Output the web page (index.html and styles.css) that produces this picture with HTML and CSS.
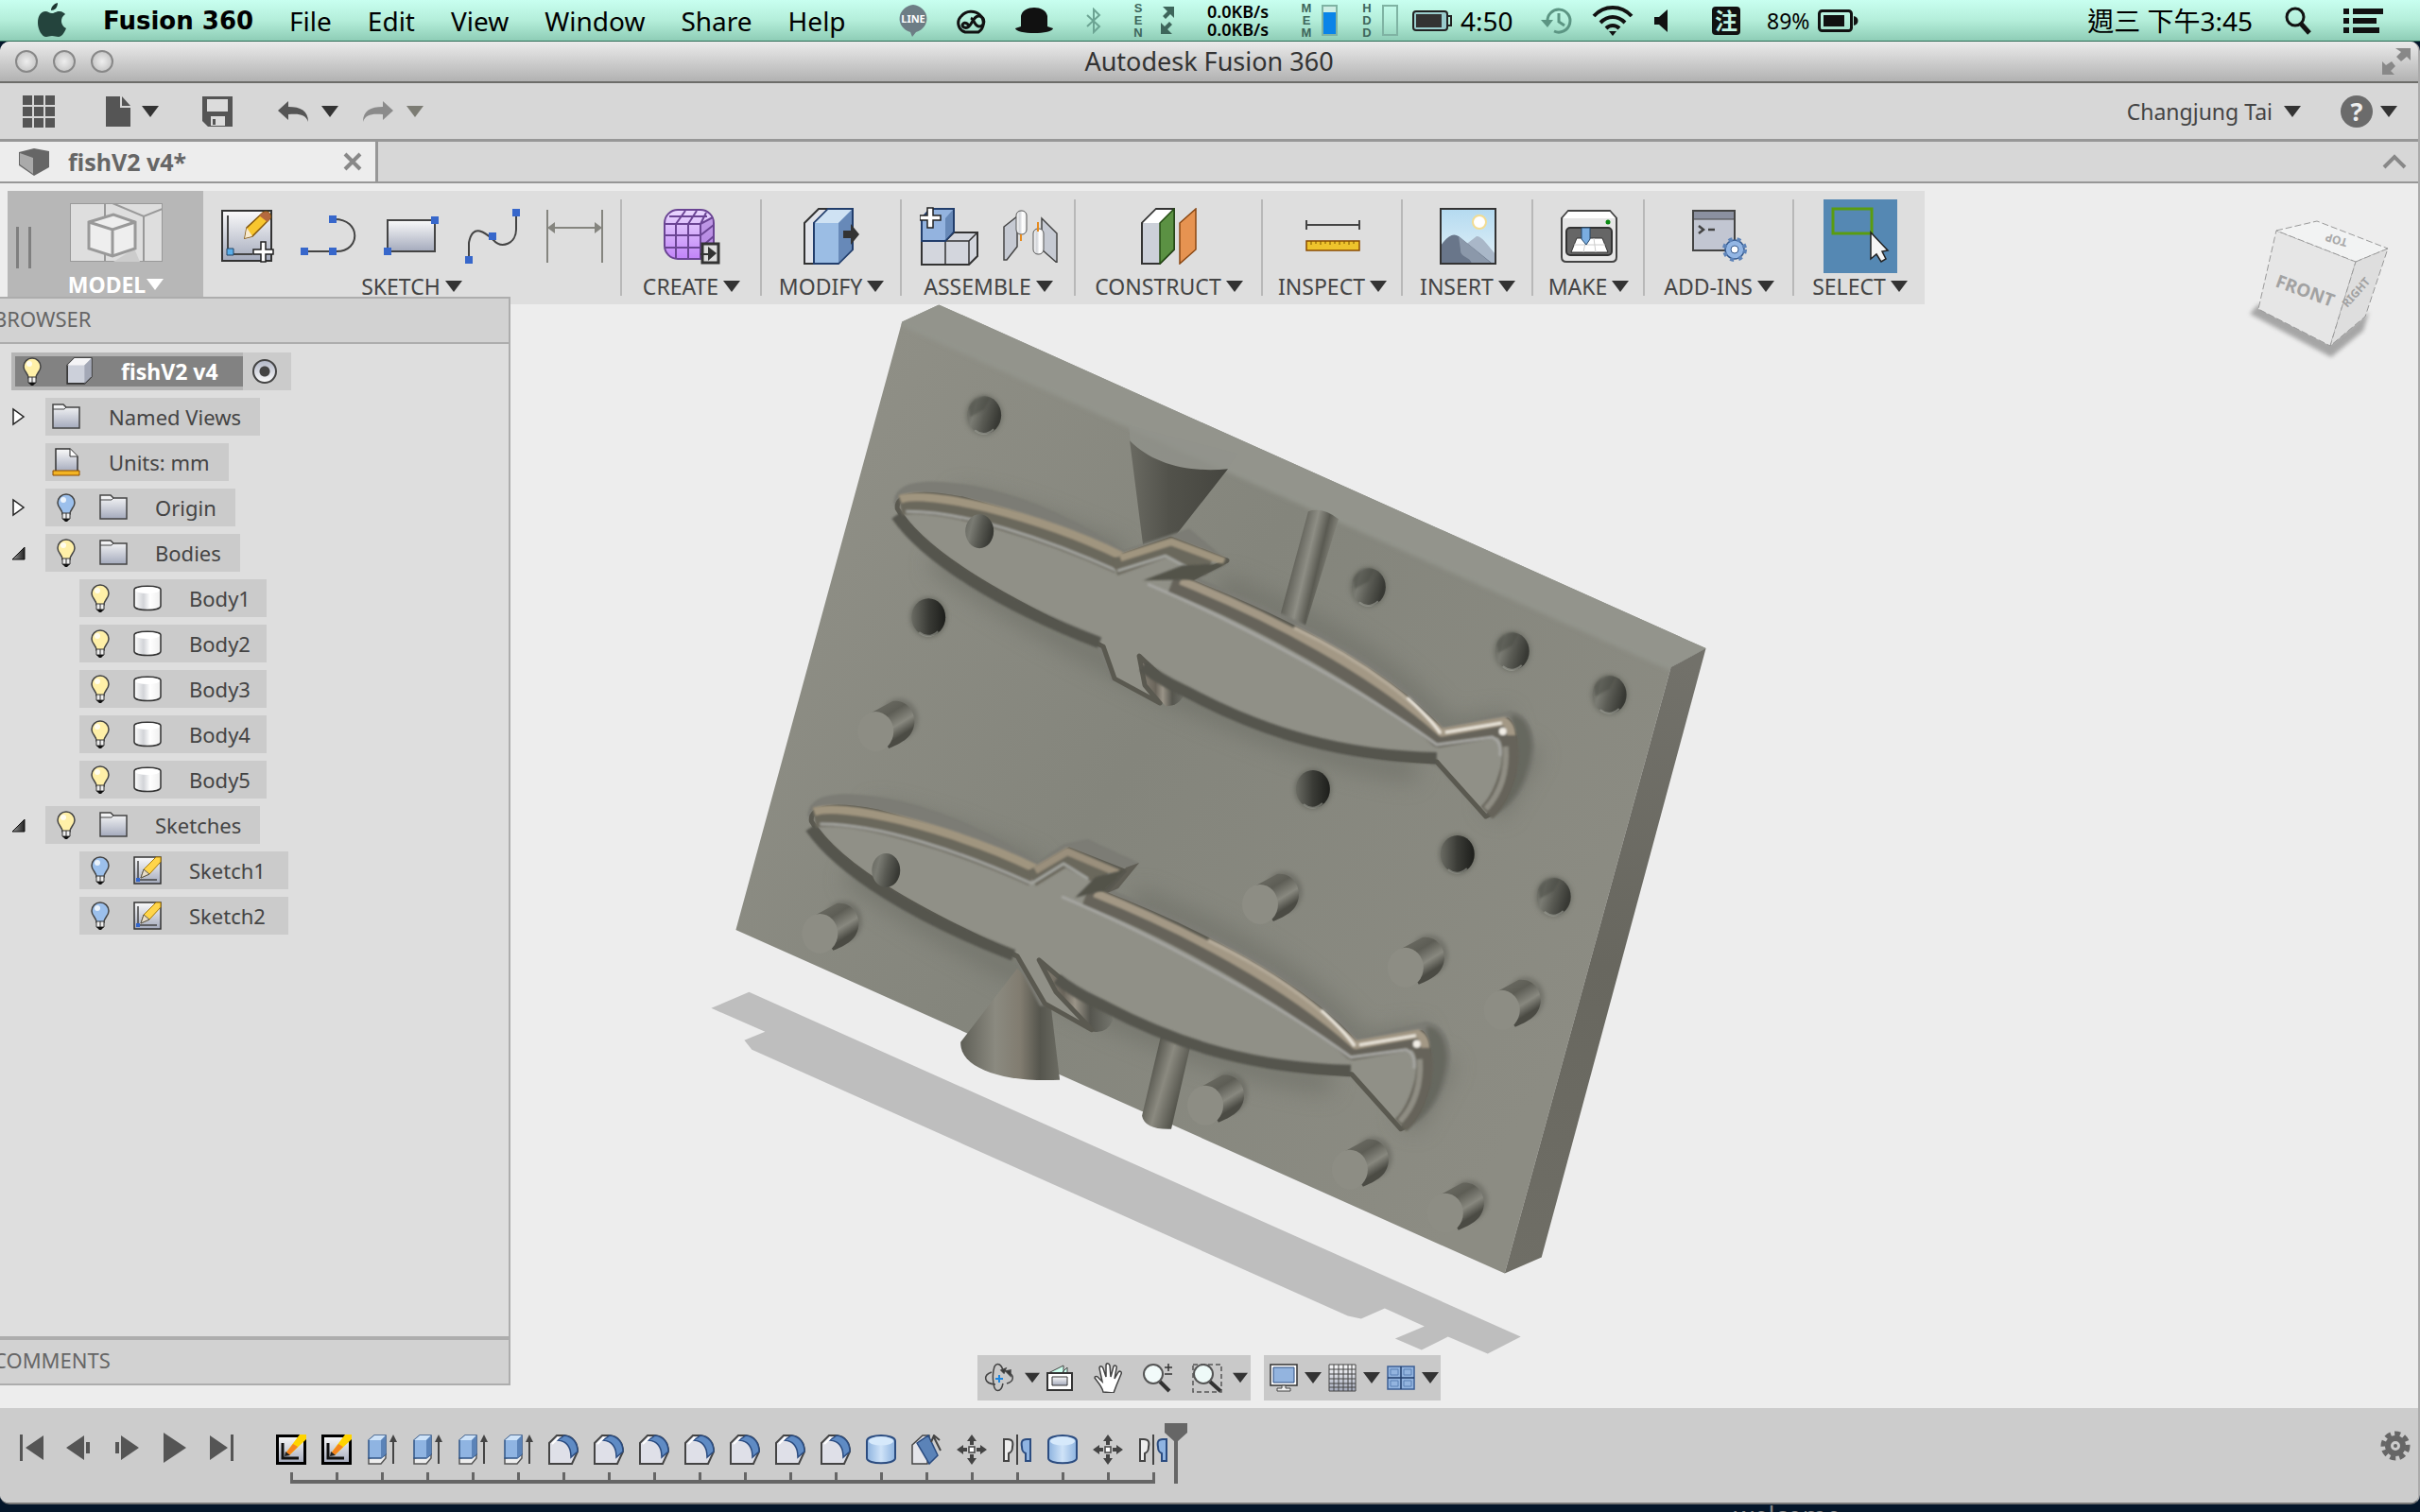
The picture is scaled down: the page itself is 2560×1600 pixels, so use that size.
FILE: index.html
```html
<!DOCTYPE html>
<html lang="en">
<head>
<meta charset="utf-8">
<title>Autodesk Fusion 360</title>
<link rel="stylesheet" href="styles.css">
</head>
<body>
<svg class="defs" aria-hidden="true">
  <defs>
    <linearGradient id="steel" x1="0" y1="0" x2="0" y2="1"><stop offset="0" stop-color="#fafafa"/><stop offset="1" stop-color="#a4aabc"/></linearGradient>
    <linearGradient id="blue" x1="0" y1="0" x2="1" y2="0"><stop offset="0" stop-color="#8db3df"/><stop offset=".5" stop-color="#cfe3f8"/><stop offset="1" stop-color="#8db3df"/></linearGradient>
    <linearGradient id="white" x1="0" y1="0" x2="1" y2="0"><stop offset="0" stop-color="#fff"/><stop offset=".35" stop-color="#d2d4d8"/><stop offset=".6" stop-color="#fff"/><stop offset="1" stop-color="#eee"/></linearGradient>
    <linearGradient id="purple" x1="0" y1="0" x2="0" y2="1"><stop offset="0" stop-color="#ead9ff"/><stop offset="1" stop-color="#c183f8"/></linearGradient>
    <linearGradient id="sky" x1="0" y1="0" x2="0" y2="1"><stop offset="0" stop-color="#b4daf0"/><stop offset="1" stop-color="#e2f1f8"/></linearGradient>
    <linearGradient id="dusk" x1="0" y1="0" x2="1" y2="0"><stop offset="0" stop-color="#999"/><stop offset="1" stop-color="#222"/></linearGradient>
    <symbol id="caret" viewBox="0 0 18 12"><path d="M0 0h18L9 12z" fill="currentColor"/></symbol>
    <symbol id="bulb-shape" viewBox="0 0 30 30"><path d="M15 1a9 9 0 0 0-9 9c0 5 5 7 5 12h8c0-5 5-7 5-12a9 9 0 0 0-9-9z" fill="currentColor" stroke="#444" stroke-width="1.5"/><circle cx="12" cy="7" r="3" fill="#fff" opacity=".8"/><path d="M11 21h8v6h-8z" fill="#eee" stroke="#333"/><path d="M15 21v6" stroke="#333"/><path d="M11 27h8l-3 3h-2z" fill="#111"/></symbol>
    <symbol id="folder" viewBox="0 0 30 28"><path d="M1 3V1h11l3 3h14v22H1z" fill="url(#steel)" stroke="#444" stroke-width="1.5"/><path d="M1 6h12l2-2" fill="none" stroke="#444"/></symbol>
    <symbol id="units" viewBox="0 0 30 30"><path d="M4 25V1h15l8 8v16z" fill="url(#steel)" stroke="#333" stroke-width="1.5"/><path d="M19 1v8h8" fill="#fff" stroke="#333"/><path d="M1 24h28v5H1z" fill="#f3b423" stroke="#8a4b00"/></symbol>
    <symbol id="cyl" viewBox="0 0 30 28"><path d="M1 5v17c0 6 28 6 28 0V5c0-5-28-5-28 0z" fill="url(#white)" stroke="#333" stroke-width="1.5"/><ellipse cx="15" cy="5.500" rx="13" ry="3.500" fill="#fff"/></symbol>
    <symbol id="cube" viewBox="0 0 28 28"><path d="M2 8l7-7h17v18l-7 7H2z" fill="#ccd0da" stroke="#333" stroke-width="1.500"/><path d="M2 8l7-7h17l-7 7z" fill="#f4f4f6"/><path d="M19 8l7-7v18l-7 7z" fill="#a3a8b6"/></symbol>
    <symbol id="sketch" viewBox="0 0 30 30"><path d="M1 1h28v28H1z" fill="url(#steel)" stroke="#333" stroke-width="1.500"/><path d="M5 5v20h20" fill="none" stroke="#444" stroke-width="1.500"/><path d="M3 23h4v4H3z" fill="#36c"/><path d="M8 23l3-9L24 1h5v5L17 19z" fill="#ffd54a" stroke="#a87900"/><path d="M8 23l3-9 6 5z" fill="#e8dcc4" stroke="#555"/></symbol>
    <symbol id="t-sketch" viewBox="0 0 32 32"><path d="M1.500 1.500h29v29h-29z" fill="url(#steel)" stroke="#000" stroke-width="3"/><path d="M7 9v16h17" fill="none" stroke="#111" stroke-width="3"/><path d="M10 20L25 0h7v5L14 22z" fill="#ffd400"/><path d="M10 20l8-10 5 3-9 9z" fill="#f5841f"/><path d="M9 23l1-5 5 4z" fill="#222"/></symbol>
    <symbol id="t-extrude" viewBox="0 0 32 32"><path d="M2 25v6h13l5-6v-4z" fill="#eee" stroke="#555" stroke-width="1.500"/><path d="M2 6l6-5h12v20l-5 4H2z" fill="#8fb4e2" stroke="#2f5487" stroke-width="1.500"/><path d="M2 6l6-5h12l-5 5z" fill="#cfe3f8"/><path d="M15 6l5-5v20l-5 4z" fill="#5b83b8"/><path d="M28 31V5" stroke="#444" stroke-width="2"/><path d="M24 8l4-8 4 8z" fill="#444"/></symbol>
    <symbol id="t-fillet" viewBox="0 0 32 32"><path d="M1 31V9l8-8h8c9 1 14 8 14 17l-6 13z" fill="#dfe0e8" stroke="#444" stroke-width="2"/><path d="M10 6L17 1c9 1 14 8 14 17l-7 6C24 14 20 7 10 6z" fill="#5f8bc4" stroke="#2b4c80" stroke-width="1.500"/><path d="M4 10l7-7" stroke="#fff" stroke-width="2"/></symbol>
    <symbol id="t-cyl" viewBox="0 0 32 32"><path d="M1 7v18c0 7 30 7 30 0V7C31-1 1-1 1 7z" fill="url(#blue)" stroke="#2b4c80" stroke-width="2"/><ellipse cx="16" cy="7" rx="13" ry="4.500" fill="#d6e9fb"/></symbol>
    <symbol id="t-draft" viewBox="0 0 32 32"><path d="M1 31V11L12 1h7L17 31z" fill="#e4e5ea" stroke="#444" stroke-width="1.500"/><path d="M6 9l12-8 10 21-9 9z" fill="#5b83b8" stroke="#2b4c80" stroke-width="1.500"/><path d="M24 3l7 14M21 8l3-7 6 5" fill="none" stroke="#444" stroke-width="2"/></symbol>
    <symbol id="t-move" viewBox="0 0 32 32"><path d="M16 0l5 7h-3v4h-4V7h-3zM16 32l5-7h-3v-4h-4v4h-3zM0 16l7-5v3h4v4H7v3zM32 16l-7-5v3h-4v4h4v3z" fill="#444"/><path d="M13 13h6v6h-6z" fill="#fff" stroke="#444" stroke-width="1.500"/></symbol>
    <symbol id="t-mirror" viewBox="0 0 32 32"><path d="M2 5h4c5 0 6 3 5 8 0 5-2 6-4 7v8H2z" fill="#eee" stroke="#444" stroke-width="2"/><path d="M30 5h-4c-5 0-6 3-5 8 0 5 2 6 4 7v8h5z" fill="#8fb4e2" stroke="#2b4c80" stroke-width="2"/><path d="M16 0v32" stroke="#444" stroke-width="2"/></symbol>
    <linearGradient id="plate" gradientUnits="userSpaceOnUse" x1="850" y1="500" x2="1700" y2="1050"><stop offset="0" stop-color="#8f8f86"/><stop offset=".45" stop-color="#84857c"/><stop offset="1" stop-color="#8c8c83"/></linearGradient>
    <linearGradient id="side" gradientUnits="userSpaceOnUse" x1="1780" y1="700" x2="1600" y2="1340"><stop offset="0" stop-color="#72716a"/><stop offset=".5" stop-color="#68675f"/><stop offset="1" stop-color="#6f6e66"/></linearGradient>
    <linearGradient id="hole" x1="0" y1="0" x2="1" y2=".3"><stop offset="0" stop-color="#66675f"/><stop offset=".3" stop-color="#7a7b73"/><stop offset=".6" stop-color="#5a5b54"/><stop offset="1" stop-color="#383934"/></linearGradient>
    <linearGradient id="deep" x1="0" y1="0" x2="1" y2="0"><stop offset="0" stop-color="#6a6b63"/><stop offset=".5" stop-color="#3a3b36"/><stop offset="1" stop-color="#1d1e1b"/></linearGradient>
    <linearGradient id="funnel" x1="0" y1="0" x2="1" y2="0"><stop offset="0" stop-color="#6a6a62"/><stop offset=".4" stop-color="#52524b"/><stop offset="1" stop-color="#45453f"/></linearGradient>
    <linearGradient id="cone" x1="0" y1="0" x2="1" y2="0"><stop offset="0" stop-color="#5f5f57"/><stop offset=".35" stop-color="#8b8a80"/><stop offset=".6" stop-color="#817c70"/><stop offset=".8" stop-color="#55554d"/><stop offset="1" stop-color="#6c6c63"/></linearGradient>
    <linearGradient id="rod" gradientUnits="userSpaceOnUse" x1="1220" y1="1130" x2="1254" y2="1140"><stop offset="0" stop-color="#5a5a52"/><stop offset=".45" stop-color="#8b8a80"/><stop offset="1" stop-color="#56564e"/></linearGradient>
    <linearGradient id="groove" gradientUnits="userSpaceOnUse" x1="1368" y1="600" x2="1402" y2="608"><stop offset="0" stop-color="#62625a"/><stop offset=".4" stop-color="#8e8e85"/><stop offset=".75" stop-color="#5a5a52"/><stop offset="1" stop-color="#7c7c73"/></linearGradient>
    <linearGradient id="keel" gradientUnits="objectBoundingBox" x1="0" y1="0" x2="1" y2="0"><stop offset="0" stop-color="#8c867a"/><stop offset=".35" stop-color="#6a655b"/><stop offset=".5" stop-color="#9a9488"/><stop offset=".7" stop-color="#55554e"/><stop offset="1" stop-color="#74756d"/></linearGradient>
    <linearGradient id="pin" x1="0" y1="0" x2=".6" y2="1"><stop offset="0" stop-color="#74746b"/><stop offset=".4" stop-color="#5d5d55"/><stop offset=".65" stop-color="#88887f"/><stop offset=".85" stop-color="#4b4b44"/></linearGradient>
    <filter id="soft" x="-20%" y="-20%" width="140%" height="140%"><feGaussianBlur stdDeviation="12"/></filter>
    <filter id="haze" x="-20%" y="-20%" width="140%" height="140%"><feGaussianBlur stdDeviation="2"/></filter>
    <filter id="sheen" x="-20%" y="-20%" width="140%" height="140%"><feGaussianBlur stdDeviation="1.200"/></filter>
    <clipPath id="face"><path d="M955 340L994 322 1806 686 1769 706 1593 1348 779 984z"/></clipPath>
    <g id="bore"><ellipse rx="20" ry="22" fill="#5f6058" opacity=".5" filter="url(#haze)"/><ellipse rx="18" ry="20" fill="url(#hole)"/><path d="M-16-8C-12-20 2-22 6-18L0-6-15 2z" fill="#45463f" opacity=".5" filter="url(#sheen)"/><path d="M-10 16Q0 24 10 15" fill="none" stroke="#a0a199" stroke-width="2" opacity=".6"/></g>
    <g id="bore-deep"><ellipse rx="20" ry="22" fill="#5f6058" opacity=".6" filter="url(#haze)"/><ellipse rx="18" ry="20" fill="url(#deep)"/><path d="M-10 16Q0 24 10 15" fill="none" stroke="#9a9b93" stroke-width="2" opacity=".6"/></g>
    <g id="peg"><ellipse cx="25" cy="-13" rx="20" ry="22" fill="#5a5a52" opacity=".45" filter="url(#haze)"/><path d="M-8-18L18-32C32-34 42-22 41-8 39 4 33 10 14 18z" fill="url(#pin)"/><ellipse rx="19" ry="21" fill="#8d8d84"/></g>
    <path id="belly" d="M949 545C980 590 1060 640 1164 680M1210 705C1235 724 1245 726 1260 734 1340 776 1420 800 1521 802" fill="none" stroke="#55554d" stroke-width="12" filter="url(#sheen)"/>
    <g id="snout" fill="none" filter="url(#sheen)">
      <path d="M953 534C1000 526 1110 562 1185 596" stroke="#6a675c" stroke-width="22"/>
      <path d="M953 528C965 523 1000 526 1045 537 1100 551 1150 570 1187 588" stroke="#a0957f" stroke-width="9"/>
      <path d="M959 541C1020 540 1110 571 1183 604" stroke="#a1a29d" stroke-width="3"/>
    </g>
    <g id="flank" fill="none" filter="url(#sheen)">
      <path d="M1240 618C1330 652 1460 725 1523 782L1588 771Q1603 778 1598 812 1590 845 1574 860" stroke="#66645a" stroke-width="18"/>
      <path d="M1594 790C1596 820 1586 842 1573 856" stroke="#8f8d83" stroke-width="6"/>
      <path d="M1250 614C1345 652 1455 710 1526 775L1592 763Q1600 768 1600 778" stroke="#a39885" stroke-width="9"/>
      <path d="M1215 618C1320 662 1450 735 1521 788L1580 780Q1590 784 1588 800" stroke="#a6a6a2" stroke-width="3"/>
      <path d="M1370 664C1450 702 1505 748 1526 776" stroke="#b5ab9a" stroke-width="4"/>
      <path d="M1490 738Q1514 760 1525 776M1530 775L1590 765" stroke="#ece7dd" stroke-width="3"/>
      <circle cx="1591" cy="774" r="4" fill="#f2eee6"/>
    </g>
  </defs>
</svg>

<header class="menubar">
  <nav class="menus" aria-label="Application menu">
    <svg class="apple" viewBox="0 0 32 38" aria-label="Apple"><path d="M22 0c0 5-3 8-7 8 0-4 3-7 7-8z" fill="#1d3530"/><path d="M16 11c3 0 4-2 8-2 3 0 5 2 6 3-6 4-5 12 1 15-2 5-5 9-8 9s-4-1-7-1-4 1-6 1c-5 0-9-8-9-15C1 13 5 9 9 9c3 0 4 2 7 2z" fill="#24443d"/></svg>
    <button class="app">Fusion 360</button>
    <button>File</button><button>Edit</button><button>View</button><button>Window</button><button>Share</button><button>Help</button>
  </nav>
  <div class="status">
    <svg width="36" height="34" viewBox="0 0 36 34"><path d="M18 0a17 15 0 0 1 3 29l-4 5-2-5A17 15 0 0 1 18 0z" fill="#6d7d85"/><text x="18" y="19" text-anchor="middle" font-size="11" font-weight="700" fill="#fff">LINE</text></svg>
    <svg width="38" height="28" viewBox="0 0 38 28" fill="none" stroke="#111" stroke-width="3"><path d="M12 26a10 10 0 0 1-4-17A13 12 0 1 1 26 26z"/><path d="M16 19l-2-2c-4-3-7 3-3 4 8 3 8-13 16-12 7 1 6 11 0 11-5 0-5-7-9-9"/></svg>
    <svg width="40" height="28" viewBox="0 0 40 28"><path d="M6 20V9c2-12 26-12 28 0v11l6 2c0 3-10 5-20 5S0 25 0 22z" fill="#111"/></svg>
    <svg width="16" height="28" viewBox="0 0 16 28"><path d="M1 8l13 12-6 6V2l6 6L1 20" fill="none" stroke="#6ca493" stroke-width="2"/></svg>
    <span class="stack">S<br>E<br>N</span>
    <svg width="16" height="32" viewBox="0 0 16 32"><path d="M3 1h12v12l-4-4-5 5-3-3 5-5zM1 18l4 4 5-5 3 3-5 5 5 5H1z" fill="#3e665b"/></svg>
    <span class="rate">0.0KB/s<br>0.0KB/s</span>
    <span class="meter"><span class="stack">M<br>E<br>M</span><i class="bar full"></i></span>
    <span class="meter"><span class="stack">H<br>D<br>D</span><i class="bar"></i></span>
    <span class="pair"><svg width="42" height="22" viewBox="0 0 42 22"><rect x="1" y="1" width="36" height="20" rx="3" fill="#9cc" stroke="#222" stroke-width="2"/><path d="M4 4h27v14H4z" fill="#333"/><path d="M38 6h3v10h-3" fill="none" stroke="#222" stroke-width="2"/></svg>4:50</span>
    <svg width="34" height="30" viewBox="0 0 34 30"><path d="M7 16A12 12 0 1 1 14 26M19 7v9l6 4" fill="none" stroke="#5c9583" stroke-width="3"/><path d="M0 14h13l-6 8z" fill="#5c9583"/></svg>
    <svg width="44" height="32" viewBox="0 0 44 32" fill="none" stroke="#111" stroke-width="4"><path d="M2 11c11-12 29-12 40 0M9 18c8-8 18-8 26 0M15 24c4-4 10-4 14 0"/><path d="M18 27h8l-4 5z" fill="#111" stroke="none"/></svg>
    <svg width="14" height="24" viewBox="0 0 14 24"><path d="M0 8h5l9-8v24l-9-8H0z" fill="#111"/></svg>
    <span class="ime">注</span>
    <span class="pair small">89% <svg width="43" height="24" viewBox="0 0 43 24"><rect x="1.500" y="1.500" width="34" height="21" rx="3" fill="none" stroke="#111" stroke-width="3"/><path d="M6 6h22v12H6z" fill="#111"/><path d="M38 7c6 1 6 9 0 10z" fill="#111"/></svg></span>
  </div>
  <div class="clock">
    <span>週三 下午3:45</span>
    <svg width="28" height="30" viewBox="0 0 28 30"><circle cx="11" cy="11" r="9" fill="none" stroke="#111" stroke-width="3"/><path d="M17 18l9 10" stroke="#111" stroke-width="5"/></svg>
    <svg width="42" height="26" viewBox="0 0 42 26"><path d="M0 0h6v6H0zM0 10h6v6H0zM0 20h6v6H0zM10 0h32v6H10zM10 10h25v6H10zM10 20h28v6H10z" fill="#111"/></svg>
  </div>
</header>

<main class="window">
  <div class="titlebar">
    <div class="lights"><button aria-label="Close"></button><button aria-label="Minimize"></button><button aria-label="Zoom"></button></div>
    <h1>Autodesk Fusion 360</h1>
    <button class="full-screen" aria-label="Full screen"><svg width="30" height="28" viewBox="0 0 30 28"><path d="M14 0h16v13l-4-4-6 5-5-5 5-5zM0 14l4 4 6-4 4 5-5 5 4 4H0z" fill="#888"/></svg></button>
  </div>

  <div class="appbar">
    <button aria-label="Data panel"><svg width="34" height="34" viewBox="0 0 34 34"><path d="M0 0h10v10H0zM12 0h10v10H12zM24 0h10v10H24zM0 12h10v10H0zM12 12h10v10H12zM24 12h10v10H24zM0 24h10v10H0zM12 24h10v10H12zM24 24h10v10H24z" fill="#555"/></svg></button>
    <button class="file" aria-label="File"><svg width="26" height="32" viewBox="0 0 26 32"><path d="M0 0h15v12h11v20H0z" fill="#555"/><path d="M17 0l9 10h-9z" fill="#555"/></svg><svg class="caret"><use href="#caret"/></svg></button>
    <button class="save" aria-label="Save"><svg width="32" height="32" viewBox="0 0 32 32"><path d="M0 0h32v32H6l-6-6z" fill="#555"/><path d="M5 3h22v13H5zM9 21h15v10H9z" fill="#dcdcdc"/><path d="M11 24h3v6h-3z" fill="#555"/></svg></button>
    <button class="undo" aria-label="Undo"><svg width="32" height="22" viewBox="0 0 32 22"><path d="M0 10L11 0v6c13 0 21 4 21 16-3-8-9-9-21-8v6z" fill="#555"/></svg><svg class="caret"><use href="#caret"/></svg></button>
    <button class="redo" aria-label="Redo" disabled><svg width="32" height="22" viewBox="0 0 32 22"><path d="M32 10L21 0v6C8 6 0 10 0 22c3-8 9-9 21-8v6z" fill="#8b8b8b"/></svg><svg class="caret"><use href="#caret"/></svg></button>
    <button class="account">Changjung Tai <svg class="caret"><use href="#caret"/></svg></button>
    <button class="help" aria-label="Help"><span>?</span><svg class="caret"><use href="#caret"/></svg></button>
  </div>

  <div class="tabs">
    <div class="tab">
      <svg width="32" height="29" viewBox="0 0 32 29"><path d="M0 4L16 0l16 3v17L16 29 0 18z" fill="#666"/><path d="M1 5l14 5v17L1 17z" fill="#aaa"/></svg>
      <span>fishV2 v4*</span>
      <button aria-label="Close tab"><svg width="20" height="20" viewBox="0 0 20 20"><path d="M2 2l16 16M18 2L2 18" stroke="#888" stroke-width="4"/></svg></button>
    </div>
    <button class="collapse" aria-label="Collapse toolbar"><svg width="26" height="16" viewBox="0 0 26 16"><path d="M2 14L13 3l11 11" fill="none" stroke="#888" stroke-width="4"/></svg></button>
  </div>

  <div class="viewport">
    <svg class="model" viewBox="0 194 2560 1296" aria-label="Fish mold model">
      <path d="M793 1050L753 1067 810 1092 788 1101 796 1111 1427 1393 1441 1396 1466 1385 1508 1404 1477 1417 1505 1429 1533 1415 1575 1433 1610 1415z" fill="#bebebe"/>
      <path d="M955 340L994 322 1806 686 1769 706 1593 1348 779 984z" fill="url(#plate)"/>
      <g clip-path="url(#face)"><path d="M940 338L994 312 1830 680 1769 710z" fill="#93948c" filter="url(#haze)"/></g>
      <path d="M1806 686L1769 706 1593 1348 1632 1331z" fill="url(#side)"/>
      <g fill="none" stroke="#6b6c64" stroke-width="26" opacity=".6" filter="url(#soft)">
        <path d="M1010 530C1080 540 1140 570 1190 590M1290 620C1400 660 1480 710 1530 775L1600 765M1620 790L1580 860M990 590C1100 670 1350 800 1500 815"/>
        <path d="M920 862C990 872 1050 902 1100 922M1200 952C1310 992 1390 1042 1440 1107L1510 1097M1530 1120L1490 1192M900 922C1010 1002 1260 1132 1410 1145"/>
      </g>
      <use href="#bore" x="1042" y="439"/><use href="#bore" x="1449" y="621"/><use href="#bore" x="1601" y="689"/><use href="#bore" x="1704" y="735"/><use href="#bore" x="1645" y="949"/>
      <use href="#bore-deep" x="983" y="653"/><use href="#bore-deep" x="1390" y="835"/><use href="#bore-deep" x="1543" y="904"/>
      <use href="#peg" x="927" y="774"/><use href="#peg" x="868" y="988"/><use href="#peg" x="1334" y="957"/><use href="#peg" x="1488" y="1024"/><use href="#peg" x="1590" y="1069"/><use href="#peg" x="1276" y="1170"/><use href="#peg" x="1429" y="1238"/><use href="#peg" x="1530" y="1284"/>
      <path d="M1195 450L1197 470C1220 492 1255 502 1299 496L1310 480z" fill="#92938b" opacity=".7"/>
      <path d="M1196 466C1220 490 1255 500 1300 496L1245 566 1210 576z" fill="url(#funnel)"/>
      <path d="M1385 541Q1400 536 1417 549L1382 662 1355 652z" fill="url(#groove)"/>
      <path d="M1077 1025L1017 1103C1016 1130 1060 1146 1122 1143L1112 1060z" fill="url(#cone)"/>
      <path d="M1231 1088L1209 1181Q1212 1196 1240 1195L1263 1095z" fill="url(#rod)"/>

      <g stroke-linejoin="round">
        <path d="M946 532C947 508 980 506 1020 512 1085 522 1140 550 1190 582L1259 559 1301 594 1270 612C1390 660 1480 705 1529 769L1599 752Q1622 755 1625 790C1622 835 1595 862 1573 866L1521 811 1240 728 1204 700 1176 721 1162 683C1080 640 975 590 946 532z" fill="#7b7c74" filter="url(#sheen)"/>
        <path d="M1600 756Q1620 758 1622 790C1619 830 1598 856 1580 862L1604 800z" fill="#66675f" filter="url(#haze)"/>
        <path d="M1206 694L1210 722 1234 747Q1248 748 1254 734L1256 722z" fill="url(#keel)"/>
        <path d="M950 538C948 522 975 519 1020 528 1090 546 1145 572 1188 588L1240 570 1299 593 1262 612 1252 612C1350 650 1470 708 1527 774L1596 762Q1608 772 1602 820 1592 856 1573 864L1521 806C1400 800 1320 768 1240 726L1206 694 1212 725 1228 744 1180 718 1168 684C1080 640 980 590 950 538z" fill="#909087" stroke="#5a5950" stroke-width="5"/>
        <use href="#belly"/><use href="#snout"/><use href="#flank"/>
        <g fill="none" filter="url(#sheen)">
          <path d="M1180 600L1236 580 1280 600" stroke="#6a675c" stroke-width="18"/>
          <path d="M1186 590L1240 573 1296 594" stroke="#a0957f" stroke-width="8"/>
          <path d="M1183 604L1234 588 1256 600" stroke="#a3a49f" stroke-width="3"/>
        </g>
        <path d="M1210 614L1252 598 1299 596 1264 613z" fill="#52524a" filter="url(#sheen)"/>
        <ellipse cx="1037" cy="562" rx="15" ry="18" fill="url(#hole)"/>
      </g>
      <g stroke-linejoin="round">
        <path d="M855 863C856 839 889 837 929 843 994 853 1049 881 1098 912L1126 893 1152 888 1206 913 1180 943C1300 991 1390 1036 1439 1098L1509 1081Q1534 1084 1536 1119C1532 1164 1506 1191 1484 1195L1431 1140 1150 1057 1101 1065 1073 1012C990 970 884 921 855 863z" fill="#7b7c74" filter="url(#sheen)"/>
        <path d="M1510 1086Q1530 1088 1532 1120C1529 1160 1508 1186 1490 1192L1514 1130z" fill="#66675f" filter="url(#haze)"/>
        <path d="M1192 918L1206 913 1184 940 1170 946z" fill="#605e55"/>
        <path d="M1098 1013L1104 1036 1158 1092Q1172 1094 1178 1080L1172 1052z" fill="url(#keel)"/>
        <path d="M859 869C857 853 884 850 929 859 999 877 1054 905 1097 920L1132 899 1190 922 1172 942 1162 943C1260 981 1380 1039 1436 1105L1505 1093Q1517 1103 1511 1151 1501 1187 1483 1195L1431 1137C1310 1131 1230 1099 1140 1050L1100 1016 1118 1050 1156 1090 1106 1062 1077 1012C990 971 889 921 859 869z" fill="#909087" stroke="#5a5950" stroke-width="5"/>
        <use href="#belly" x="-91" y="331"/><use href="#snout" x="-91" y="331"/><use href="#flank" x="-91" y="331"/>
        <g fill="none" filter="url(#sheen)">
          <path d="M1092 930L1128 908 1170 930" stroke="#6a675c" stroke-width="18"/>
          <path d="M1096 921L1130 901 1184 924" stroke="#9a8f7b" stroke-width="8"/>
          <path d="M1092 935L1126 914 1152 930" stroke="#a3a49f" stroke-width="3"/>
        </g>
        <path d="M1138 950L1160 928 1192 920 1170 942z" fill="#52524a" filter="url(#sheen)"/>
        <ellipse cx="938" cy="921" rx="15" ry="18" fill="url(#hole)"/>
      </g>
    </svg>

    <svg class="view-cube" viewBox="2370 220 180 180" aria-label="View cube">
      <path d="M2389 322L2465 362 2506 330 2500 350 2466 378 2380 332z" fill="#888" opacity=".7" filter="url(#haze)"/>
      <g stroke="#999" stroke-dasharray="7 3">
        <path d="M2408 244L2492 277 2465 366 2389 327z" fill="#e6e6e6"/>
        <path d="M2408 244L2451 234 2526 263 2492 277z" fill="#f2f3f3"/>
        <path d="M2492 277L2526 263 2502 335 2465 366z" fill="#dedede"/>
      </g>
      <text transform="translate(2406 303) rotate(20)" font-size="19" font-weight="700" fill="#a2a2a2">FRONT</text>
      <text transform="translate(2484 253) rotate(196)" font-size="12" font-weight="700" fill="#aaa">TOP</text>
      <text transform="translate(2483 326) rotate(-48)" font-size="12" font-weight="700" fill="#a2a2a2">RIGHT</text>
    </svg>

    <div class="ribbon">
      <div class="group workspace">
        <div class="art"><svg width="98" height="62" viewBox="0 0 98 62"><path d="M0 0h98v62H0z" fill="#dedede" stroke="#999" stroke-width="2"/><path d="M37 0v62M45 0l33 14 20-8M78 14v48" fill="none" stroke="#999" stroke-width="2"/><path d="M68 48l6 14H46z" fill="#ccc"/><path d="M20 20l26-8 23 8v28l-24 8-25-8z" fill="#eee" stroke="#999" stroke-width="3"/><path d="M20 20l25 8 24-8M45 28v28" fill="none" stroke="#999" stroke-width="3"/></svg></div>
        <button>MODEL<svg class="caret"><use href="#caret"/></svg></button>
      </div>
      <div class="group first">
        <div class="art sketch-art">
          <svg width="56" height="56" viewBox="0 0 56 56"><path d="M1 1h52v53H1z" fill="url(#steel)" stroke="#333" stroke-width="2"/><path d="M7 6v41h26" fill="none" stroke="#444" stroke-width="2"/><path d="M6 41h7v7H6z" fill="#5aaeea" stroke="#246" /><path d="M25 30l2-11L44 3c5-3 9 1 8 6L33 28z" fill="#f8c62e" stroke="#84570c" stroke-width="1.500"/><path d="M44 3c5-3 9 1 8 6l-3 4-9-7z" fill="#b4693f"/><path d="M25 30l2-11 6 9z" fill="#f7ead0"/><path d="M42 34h5v8h8v5h-8v8h-5v-8h-8v-5h8z" fill="#fff" stroke="#222" stroke-width="1.500"/></svg>
          <svg width="60" height="44" viewBox="0 0 60 44"><path d="M4 38h34c26 0 26-34-2-34" fill="none" stroke="#444" stroke-width="2"/><path d="M0 34h8v8H0zM30 34h8v8h-8zM30 0h8v8h-8z" fill="#3767cb"/></svg>
          <svg width="58" height="42" viewBox="0 0 58 42"><path d="M4 4h50v33H4z" fill="url(#steel)" stroke="#444" stroke-width="2"/><path d="M0 33h8v8H0zM50 0h8v8h-8z" fill="#3767cb"/></svg>
          <svg width="58" height="58" viewBox="0 0 58 58"><path d="M4 54V36c4-22 18-10 25-4 10 12 25 4 25-10V4" fill="none" stroke="#444" stroke-width="2"/><path d="M0 50h8v8H0zM25 25h8v8h-8zM50 0h8v8h-8z" fill="#3767cb"/></svg>
          <svg width="60" height="56" viewBox="0 0 60 56"><path d="M1 0v56M59 0v56M3 19h54" stroke="#85857f" stroke-width="2"/><path d="M1 19l8-6v12zM59 19l-8-6v12z" fill="#85857f"/></svg>
        </div>
        <button>SKETCH<svg class="caret"><use href="#caret"/></svg></button>
      </div>
      <div class="group">
        <div class="art"><svg width="62" height="60" viewBox="0 0 62 60"><rect x="2" y="2" width="52" height="52" rx="14" fill="url(#purple)" stroke="#6b4594" stroke-width="2"/><path d="M40 17l13-6v30l-13 13z" fill="#a87bd6" opacity=".6"/><path d="M3 17h37l13-7M3 29h37l14-11M3 42h37l14-12M14 54V17L24 3M27 54V17L36 3M40 54V17L46 5M7 9h40" fill="none" stroke="#6b4594" stroke-width="2"/><path d="M42 38h17v20H42z" fill="#ddd" stroke="#333" stroke-width="3"/><path d="M40 48h8v-7l9 7-9 8v-6h-8z" fill="#333"/></svg></div>
        <button>CREATE<svg class="caret"><use href="#caret"/></svg></button>
      </div>
      <div class="group">
        <div class="art"><svg width="60" height="60" viewBox="0 0 60 60"><path d="M1 59V16L16 1h12L14 59z" fill="#e2e4ea" stroke="#333" stroke-width="2"/><path d="M11 59V16L26 1h26v43L37 59z" fill="#9bbde4" stroke="#223e6c" stroke-width="2"/><path d="M12 16L26 2h25L37 16z" fill="#cfe2f3"/><path d="M37 16L51 2v42L37 58z" fill="#6789b8"/><path d="M42 24h8v-7l9 11-9 11v-7h-8z" fill="#333"/></svg></div>
        <button>MODIFY<svg class="caret"><use href="#caret"/></svg></button>
      </div>
      <div class="group">
        <div class="art two"><svg width="62" height="62" viewBox="0 0 62 62"><path d="M2 36h25l9-9h25v25l-9 9H2z" fill="#d3d6dd" stroke="#333" stroke-width="2"/><path d="M27 36h25l9-9M52 36v25M27 36v25" fill="none" stroke="#333" stroke-width="1.500"/><path d="M2 12l9-10h25v24l-9 10H2z" fill="#93b3df" stroke="#223e6c" stroke-width="2"/><path d="M27 12l8-9v23l-8 9z" fill="#6789b8"/><path d="M8 1h6v8h8v5h-8v8H8v-8H0V9h8z" fill="#fff" stroke="#222" stroke-width="1.500"/></svg>
        <svg width="58" height="56" viewBox="0 0 58 56"><path d="M1 18L15 7v32L4 53H1zM57 56L41 42V9l16 16z" fill="#c6cad3" stroke="#444" stroke-width="1.500"/><rect x="14" y="1" width="11" height="25" rx="5" fill="url(#white)" stroke="#555"/><rect x="32" y="20" width="11" height="27" rx="5" fill="url(#white)" stroke="#555"/><path d="M19 26v7M37 13v10" stroke="#e68a1e" stroke-width="2"/></svg></div>
        <button>ASSEMBLE<svg class="caret"><use href="#caret"/></svg></button>
      </div>
      <div class="group">
        <div class="art"><svg width="60" height="60" viewBox="0 0 60 60"><path d="M1 59V16L16 1h19v43L20 59z" fill="#ccd0d9" stroke="#333" stroke-width="2"/><path d="M2 16L16 2h18L20 16z" fill="#fff"/><path d="M20 16L35 1v43L20 59z" fill="#5b9143" stroke="#254d14" stroke-width="1.500"/><path d="M41 16L58 1v43L41 59z" fill="#e69351" stroke="#8a4712" stroke-width="1.500"/></svg></div>
        <button>CONSTRUCT<svg class="caret"><use href="#caret"/></svg></button>
      </div>
      <div class="group">
        <div class="art"><svg width="58" height="34" viewBox="0 0 58 34"><path d="M1 0v10M57 0v10M1 5h56" stroke="#444" stroke-width="2"/><path d="M1 22h56v10H1z" fill="#eec32c" stroke="#8a4b00" stroke-width="1.500"/><path d="M6 22v4M11 22v3M16 22v4M21 22v3M26 22v4M31 22v3M36 22v4M41 22v3M46 22v4M51 22v3" stroke="#7a5200"/></svg></div>
        <button>INSPECT<svg class="caret"><use href="#caret"/></svg></button>
      </div>
      <div class="group">
        <div class="art"><svg width="60" height="60" viewBox="0 0 60 60"><path d="M1 1h58v58H1z" fill="url(#sky)"/><circle cx="42" cy="15" r="7" fill="#fff" stroke="#f2dc92" stroke-width="2"/><path d="M26 40l13-10c5-1 12 10 20 19v10H30z" fill="#a9b7c8"/><path d="M1 40C8 30 14 26 20 30l36 29H1z" fill="#69768a"/><path d="M20 30l35 29H34c-2-8-13-6-12-15z" fill="#8b98aa"/><path d="M1 1h58v58H1z" fill="none" stroke="#333" stroke-width="2"/></svg></div>
        <button>INSERT<svg class="caret"><use href="#caret"/></svg></button>
      </div>
      <div class="group">
        <div class="art"><svg width="60" height="56" viewBox="0 0 60 56"><path d="M1 9l7-8h44l7 8v41q0 5-5 5H6q-5 0-5-5z" fill="#e6e6e6" stroke="#444" stroke-width="2"/><path d="M2 9l6-7h44l6 7z" fill="#fff"/><circle cx="50" cy="13" r="2.500" fill="#0a8a12"/><rect x="6" y="19" width="48" height="29" rx="4" fill="#666" stroke="#333" stroke-width="2"/><path d="M17 30h27l6 15H11z" fill="#fff" stroke="#333"/><path d="M14 37h33M27 30l-3 15M35 30l2 15" stroke="#ccc"/><path d="M22 19h9v12l-4 6-5-6z" fill="#7aade0" stroke="#246"/></svg></div>
        <button>MAKE<svg class="caret"><use href="#caret"/></svg></button>
      </div>
      <div class="group">
        <div class="art"><svg width="58" height="56" viewBox="0 0 58 56"><path d="M1 1h44v42H1z" fill="#c2c6d2" stroke="#444" stroke-width="2"/><path d="M2 2h42v8H2z" fill="#8b90a0"/><path d="M1 10h44" stroke="#444"/><path d="M7 17l5 4-5 4M17 21h7" fill="none" stroke="#444" stroke-width="2.500"/><circle cx="45" cy="42" r="10" fill="#93b6e4" stroke="#34588c" stroke-width="1.500"/><circle cx="45" cy="42" r="11" fill="none" stroke="#5d83b8" stroke-width="4" stroke-dasharray="4 5"/><circle cx="45" cy="42" r="4" fill="#fff" stroke="#34588c"/></svg></div>
        <button>ADD-INS<svg class="caret"><use href="#caret"/></svg></button>
      </div>
      <div class="group select">
        <div class="art"><svg class="picked" width="78" height="78" viewBox="0 0 78 78"><path d="M10 10h41v26H10z" fill="none" stroke="#5a9c10" stroke-width="3"/><path d="M50 35v28l6-5 5 8 5-3-4-8 6-1z" fill="#f5f5f5" stroke="#222" stroke-width="1.500"/></svg></div>
        <button>SELECT<svg class="caret"><use href="#caret"/></svg></button>
      </div>
    </div>

    <aside class="browser">
      <h2>BROWSER</h2>
      <ul class="tree">
        <li class="root"><div class="row"><div class="current"><svg class="ico on"><use href="#bulb-shape"/></svg><svg class="ico"><use href="#cube"/></svg><span>fishV2 v4</span></div><input type="radio" checked aria-label="Activate fishV2 v4"></div></li>
        <li><svg class="twist" viewBox="0 0 14 20"><path d="M1 2v16l11-8z" fill="#fff" stroke="#222" stroke-width="1.500"/></svg><div class="row"><svg class="ico"><use href="#folder"/></svg><span>Named Views</span></div></li>
        <li><div class="row"><svg class="ico"><use href="#units"/></svg><span>Units: mm</span></div></li>
        <li><svg class="twist" viewBox="0 0 14 20"><path d="M1 2v16l11-8z" fill="#fff" stroke="#222" stroke-width="1.500"/></svg><div class="row"><svg class="ico off"><use href="#bulb-shape"/></svg><svg class="ico"><use href="#folder"/></svg><span>Origin</span></div></li>
        <li><svg class="twist" viewBox="0 0 14 20"><path d="M0 17L13 4v13z" fill="url(#dusk)" stroke="#111"/></svg><div class="row"><svg class="ico on"><use href="#bulb-shape"/></svg><svg class="ico"><use href="#folder"/></svg><span>Bodies</span></div></li>
        <li class="child"><div class="row"><svg class="ico on"><use href="#bulb-shape"/></svg><svg class="ico"><use href="#cyl"/></svg><span>Body1</span></div></li>
        <li class="child"><div class="row"><svg class="ico on"><use href="#bulb-shape"/></svg><svg class="ico"><use href="#cyl"/></svg><span>Body2</span></div></li>
        <li class="child"><div class="row"><svg class="ico on"><use href="#bulb-shape"/></svg><svg class="ico"><use href="#cyl"/></svg><span>Body3</span></div></li>
        <li class="child"><div class="row"><svg class="ico on"><use href="#bulb-shape"/></svg><svg class="ico"><use href="#cyl"/></svg><span>Body4</span></div></li>
        <li class="child"><div class="row"><svg class="ico on"><use href="#bulb-shape"/></svg><svg class="ico"><use href="#cyl"/></svg><span>Body5</span></div></li>
        <li><svg class="twist" viewBox="0 0 14 20"><path d="M0 17L13 4v13z" fill="url(#dusk)" stroke="#111"/></svg><div class="row"><svg class="ico on"><use href="#bulb-shape"/></svg><svg class="ico"><use href="#folder"/></svg><span>Sketches</span></div></li>
        <li class="child"><div class="row wide"><svg class="ico off"><use href="#bulb-shape"/></svg><svg class="ico"><use href="#sketch"/></svg><span>Sketch1</span></div></li>
        <li class="child"><div class="row wide"><svg class="ico off"><use href="#bulb-shape"/></svg><svg class="ico"><use href="#sketch"/></svg><span>Sketch2</span></div></li>
      </ul>
      <h2 class="comments">COMMENTS</h2>
    </aside>

    <div class="navbars">
      <div class="bar-set">
        <button aria-label="Orbit"><svg width="32" height="32" viewBox="0 0 32 32" fill="none" stroke="#444" stroke-width="1.500"><path d="M11 4c3-5 8-2 9 5M20 22c-2 10-9 10-10 0-1-6-1-12 1-18"/><path d="M8 10c-9 3-9 12 4 13M24 22c8-2 8-9 2-11"/><path d="M18 8l3 3 2-5zM23 9l5 5V8z" fill="#333"/><path d="M16 13v8M12 17h8" stroke="#1c86e0" stroke-width="2"/></svg></button>
        <svg class="caret"><use href="#caret"/></svg>
        <button aria-label="Look at"><svg width="28" height="28" viewBox="0 0 28 28"><path d="M2 9L18 1v8zM22 3v6h-6z" fill="#cfe" stroke="#444"/><path d="M1 9h26v18H1z" fill="#fff" stroke="#333" stroke-width="2"/><path d="M6 13h16v9H6z" fill="url(#steel)" stroke="#333"/></svg></button>
        <button aria-label="Pan"><svg width="32" height="32" viewBox="0 0 32 32"><path d="M10 31C9 25 3 19 1 16c0-2 3-2 4 0l4 4L6 6c0-3 3-3 4 0l3 9V3c0-3 3-3 4 0l1 12 3-11c1-2 4-1 3 2l-2 11 4-7c2-2 4 0 3 2l-5 12-3 8z" fill="#fff" stroke="#444" stroke-width="1.500"/></svg></button>
        <button aria-label="Zoom"><svg width="34" height="32" viewBox="0 0 34 32"><path d="M19 20l10 10" stroke="#333" stroke-width="4"/><circle cx="12" cy="12" r="10" fill="#f2fbfa" stroke="#555" stroke-width="2"/><path d="M28 1v8M24 5h8M24 12h8" stroke="#333" stroke-width="1.500"/></svg></button>
        <button aria-label="Fit"><svg width="34" height="32" viewBox="0 0 34 32"><path d="M2 2h30v29H2z" fill="none" stroke="#555" stroke-dasharray="5 3" stroke-width="1.500"/><path d="M20 20l11 10" stroke="#333" stroke-width="4"/><circle cx="13" cy="12" r="10" fill="#eefaf8" stroke="#555" stroke-width="2"/></svg></button>
        <svg class="caret"><use href="#caret"/></svg>
      </div>
      <div class="bar-set tight">
        <button aria-label="Display"><svg width="30" height="30" viewBox="0 0 30 30"><path d="M1 1h28v22H1z" fill="#fff" stroke="#333" stroke-width="1.500"/><path d="M4 4h22v16H4z" fill="#93b4df" stroke="#2b4c80"/><path d="M13 23h4v3h5v3H8v-3h5z" fill="#eee" stroke="#444"/></svg></button><svg class="caret"><use href="#caret"/></svg>
        <button aria-label="Grid"><svg width="30" height="30" viewBox="0 0 30 30"><path d="M1 1h28v28H1z" fill="url(#steel)"/><path d="M1 1h28v28H1zM1 6h28M1 11h28M1 16h28M1 21h28M1 25h28M6 1v28M11 1v28M16 1v28M21 1v28M25 1v28" fill="none" stroke="#444"/></svg></button><svg class="caret"><use href="#caret"/></svg>
        <button aria-label="Viewports"><svg width="30" height="26" viewBox="0 0 30 26"><path d="M1 1h28v24H1z" fill="#93b4df" stroke="#3c5f95" stroke-width="1.500"/><path d="M15 1v24M1 13h28" stroke="#223e6c" stroke-width="1.500"/><path d="M4 4h8v6H4zM18 4h8v6h-8zM4 16h8v6H4zM18 16h8v6h-8z" fill="none" stroke="#5b80b4"/></svg></button><svg class="caret"><use href="#caret"/></svg>
      </div>
    </div>
  </div>

  <footer class="timeline">
    <div class="playback">
      <button aria-label="To start"><svg width="30" height="28" viewBox="0 0 30 28"><path d="M2 0h3v28H2zM27 1v26L8 14z" fill="#555"/></svg></button>
      <button aria-label="Step back"><svg width="30" height="28" viewBox="0 0 30 28"><path d="M20 1v26L1 14zM22 8h4v12h-4z" fill="#555"/></svg></button>
      <button aria-label="Step forward"><svg width="30" height="28" viewBox="0 0 30 28"><path d="M9 1v26l19-13zM3 8h4v12H3z" fill="#555"/></svg></button>
      <button aria-label="Play"><svg width="30" height="32" viewBox="0 0 30 32"><path d="M4 0v32l24-16z" fill="#555"/></svg></button>
      <button aria-label="To end"><svg width="30" height="28" viewBox="0 0 30 28"><path d="M25 0h3v28h-3zM3 1v26l19-13z" fill="#555"/></svg></button>
    </div>
    <ol class="steps">
      <li><svg><use href="#t-sketch"/></svg></li><li><svg><use href="#t-sketch"/></svg></li>
      <li><svg><use href="#t-extrude"/></svg></li><li><svg><use href="#t-extrude"/></svg></li><li><svg><use href="#t-extrude"/></svg></li><li><svg><use href="#t-extrude"/></svg></li>
      <li><svg><use href="#t-fillet"/></svg></li><li><svg><use href="#t-fillet"/></svg></li><li><svg><use href="#t-fillet"/></svg></li><li><svg><use href="#t-fillet"/></svg></li><li><svg><use href="#t-fillet"/></svg></li><li><svg><use href="#t-fillet"/></svg></li><li><svg><use href="#t-fillet"/></svg></li>
      <li><svg><use href="#t-cyl"/></svg></li><li><svg><use href="#t-draft"/></svg></li><li><svg><use href="#t-move"/></svg></li><li><svg><use href="#t-mirror"/></svg></li><li><svg><use href="#t-cyl"/></svg></li><li><svg><use href="#t-move"/></svg></li><li><svg><use href="#t-mirror"/></svg></li>
    </ol>
    <svg class="marker" width="24" height="64" viewBox="0 0 24 64"><path d="M0 0h24v10l-10 9v45h-4V19L0 10z" fill="#666"/></svg>
    <button class="settings" aria-label="Timeline settings"><svg width="32" height="32" viewBox="0 0 32 32"><circle cx="16" cy="16" r="8" fill="none" stroke="#666" stroke-width="6"/><circle cx="16" cy="16" r="13" fill="none" stroke="#666" stroke-width="5" stroke-dasharray="6 4"/><circle cx="16" cy="16" r="2" fill="#666"/></svg></button>
  </footer>
</main>
<div class="desktop">welcome</div>
</body>
</html>
```
FILE: styles.css
```css
* { box-sizing: border-box; }

body {
  margin: 0;
  min-height: 100vh;
  display: flex;
  flex-direction: column;
  background: #04162a;
  color: #444;
  font-family: "Noto Sans", "Noto Sans CJK TC", sans-serif;
  font-size: 22px;
}

button {
  display: flex;
  align-items: center;
  padding: 0;
  border: 0;
  background: none;
  color: inherit;
  font: inherit;
  white-space: nowrap;
}

svg { display: block; flex: none; }
.defs { position: absolute; width: 0; height: 0; }
.caret { width: 18px; height: 12px; color: #333; }

/* System menu bar */
.menubar {
  display: flex;
  align-items: center;
  height: 44px;
  background: linear-gradient(#c8fff0, #b4eeda 50%, #8ecdb6);
  border-bottom: 1px solid #2c6a55;
  color: #000;
  font-size: 28px;
  line-height: 42px;
}
.menus { display: flex; align-items: center; gap: 38px; width: 948px; padding-left: 39px; }
.apple { width: 32px; height: 38px; }
.app { font-family: "DejaVu Sans", sans-serif; font-size: 26px; font-weight: 700; }
.status {
  display: grid;
  grid-template-columns: 61px 65px 75px 47px 31px 50px 97px 64px 56px 136px 54px 66px 61px 58px 98px;
  align-items: center;
}
.stack { width: 16px; font-family: "Liberation Sans", sans-serif; font-size: 13px; font-weight: 700; line-height: 13px; color: #3e665b; text-align: center; }
.rate { font-size: 18px; font-weight: 600; line-height: 19px; white-space: nowrap; }
.meter { display: flex; align-items: center; gap: 8px; }
.bar { width: 17px; height: 33px; border: 2px solid #7fb3a3; }
.full { background: linear-gradient(#cdeee4 6px, #0a84e8 6px); }
.pair { display: flex; align-items: center; gap: 9px; white-space: nowrap; }
.small { font-size: 23px; }
.ime { width: 30px; height: 30px; border-radius: 4px; background: #111; color: #c0f3e3; font-size: 24px; font-weight: 700; line-height: 30px; text-align: center; }
.clock { display: flex; align-items: center; gap: 34px; margin-left: auto; padding-right: 39px; }

/* Window frame */
.window {
  flex: 1;
  display: flex;
  flex-direction: column;
  border-right: 2px solid #aaa;
  border-bottom: 2px solid #777;
  border-radius: 10px;
  overflow: hidden;
  background: #ededed;
}
.titlebar {
  display: grid;
  grid-template-columns: 1fr auto 1fr;
  align-items: center;
  height: 44px;
  padding: 0 8px;
  background: linear-gradient(#ebebeb, #b2b2b2);
  border-bottom: 2px solid #6d6d6a;
}
.lights { display: flex; gap: 16px; margin-left: 8px; }
.lights button { width: 24px; height: 24px; border: 2px solid #888; border-radius: 50%; background: radial-gradient(#eee, #bbb); }
h1 { margin: 0; font-size: 27px; font-weight: 400; line-height: 40px; color: #333; }
.full-screen { justify-self: end; }

.appbar { display: flex; align-items: center; height: 62px; padding: 0 22px 0 24px; background: #d7d7d7; border-bottom: 3px solid #979797; }
.file { gap: 12px; margin-left: 54px; }
.save { margin-left: 46px; }
.undo { gap: 14px; margin-left: 48px; }
.redo { gap: 14px; margin-left: 26px; }
.redo .caret { color: #7c7c74; }
.account { gap: 12px; margin-left: auto; font-size: 23px; }
.help { gap: 8px; margin-left: 42px; }
.help span { width: 34px; height: 34px; border-radius: 50%; background: #6b6b6b; color: #eee; font-size: 27px; font-weight: 700; line-height: 34px; text-align: center; }

.tabs { display: flex; align-items: center; justify-content: space-between; height: 44px; padding-right: 12px; background: #d7d7d7; border-bottom: 2px solid #979797; }
.tab { display: flex; align-items: center; width: 400px; height: 42px; padding: 0 14px 0 20px; background: #ededed; border-right: 3px solid #979797; color: #666; font-size: 25px; font-weight: 700; }
.tab span { margin-left: 20px; }
.tab button { margin-left: auto; }

/* Modelling area */
.viewport { position: relative; flex: 1; display: flex; flex-direction: column; align-items: flex-start; padding: 8px 0 24px; }
.model { position: absolute; inset: 0; width: 100%; height: 100%; }
.view-cube { position: absolute; top: 26px; right: 8px; width: 180px; height: 180px; }

.ribbon {
  position: relative;
  display: grid;
  grid-template-columns: 207px 441px 148px 148px 184px 198px 148px 138px 118px 158px 140px;
  height: 120px;
  margin-left: 8px;
  background: #dedede;
}
.group { position: relative; display: flex; flex-direction: column; align-items: center; padding: 9px 0 0 3px; }
.group::before { content: ""; position: absolute; left: 0; top: 9px; width: 2px; height: 102px; background: #b8b8b8; }
.first { padding-left: 0; }
.first::before { display: none; }
.art { display: flex; align-items: center; justify-content: center; height: 78px; }
.sketch-art { gap: 28px; }
.two { gap: 26px; }
.group button { gap: 5px; height: 28px; font-size: 23px; line-height: 28px; }
.picked { background: #5588b3; }
.workspace { padding-left: 22px; background: #b7b7b7; color: #fff; font-weight: 700; }
.workspace .art { height: 76px; padding-bottom: 6px; }
.workspace::before { left: 9px; top: 38px; width: 10px; height: 44px; border: solid #7f7f7f; border-width: 0 3px; background: none; }
.workspace button { gap: 1px; }
.workspace .caret { color: #fff; }

.browser { position: relative; flex: 1; display: flex; flex-direction: column; width: 540px; margin-top: -8px; background: #dedede; border: solid #adadad; border-width: 2px 2px 2px 0; }
h2 { height: 48px; margin: 0 0 0 -7px; padding: 0; background: #d2d2d2; border-bottom: 2px solid #adadad; color: #666; font-size: 22px; font-weight: 400; line-height: 42px; }
.comments { margin-top: auto; border-top: 4px solid #adadad; border-bottom: 0; height: 50px; line-height: 42px; }

.tree { display: grid; gap: 8px; margin: 0; padding: 9px 0 0; list-style: none; }
.tree li { display: flex; align-items: center; height: 40px; padding-left: 48px; }
.tree .child { padding-left: 84px; }
.tree .root { padding-left: 12px; }
.twist { width: 14px; height: 20px; margin: 0 21px 0 -35px; }
.row { display: flex; align-items: center; height: 40px; padding: 0 20px 0 7px; background: #cbcbcb; }
.child .row { padding-right: 17px; }
.child .wide { padding-right: 24px; }
.row span { margin-left: 30px; white-space: nowrap; }
.ico { width: 30px; height: 30px; }
.ico + .ico { margin-left: 20px; }
.ico + .ico + span { margin-left: 29px; }
.on { color: #fff0a8; }
.off { color: #9cc0ec; }
.root .row { padding: 0 15px 0 0; }
.current { display: flex; align-items: center; height: 40px; padding: 0 26px 0 3px; background: #828282; border: solid #b5b5b5; border-width: 4px 0 4px 4px; color: #fff; font-size: 23px; font-weight: 700; }
input[type="radio"] { appearance: none; width: 26px; height: 26px; margin: 0 0 0 10px; border: 2px solid #444; border-radius: 50%; background: radial-gradient(#444 5px, transparent 6px), linear-gradient(#b3b8c8, #fafafa); }

.navbars { position: absolute; left: 0; right: 0; bottom: 8px; display: flex; justify-content: center; gap: 14px; }
.bar-set { display: flex; align-items: center; height: 48px; padding-left: 5px; background: #c9c9c9; }
.bar-set .caret { width: 16px; margin: 0 3px 0 9px; }
.bar-set button { width: 36px; justify-content: center; }
.bar-set button + button { margin-left: 16px; }
.tight { padding-left: 1px; }
.tight .caret { width: 18px; margin: 0 2px; }
.tight button { width: 40px; }

/* Timeline */
.timeline { display: flex; height: 100px; padding-right: 8px; background: #cccccc; }
.playback { display: flex; align-items: center; gap: 20px; width: 284px; height: 84px; padding-left: 19px; }
.steps { position: relative; display: flex; margin: 0; padding: 28px 0 0; list-style: none; }
.steps li { display: flex; flex-direction: column; align-items: center; width: 48px; }
.steps svg { width: 32px; height: 32px; }
.steps li::after { content: ""; width: 3px; height: 12px; margin-top: 8px; background: #666; }
.steps::after { content: ""; position: absolute; left: 23px; right: 23px; top: 76px; height: 4px; background: #666; }
.marker { margin: 16px 0 0 -12px; }
.settings { height: 80px; margin-left: auto; }

.desktop { height: 8px; overflow: hidden; padding-left: 1834px; background: #04162a; color: #888; font-size: 27px; line-height: 24px; }
```
